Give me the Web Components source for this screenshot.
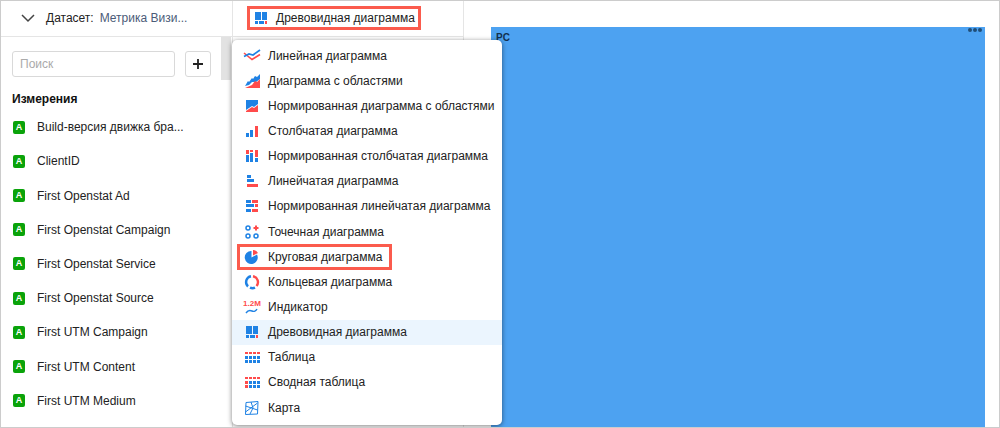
<!DOCTYPE html>
<html lang="ru">
<head>
<meta charset="utf-8">
<title>Датасет: Метрика Визиты</title>
<style>
html, body { height: 100%; margin: 0; }
body { font: 12px/16px "Liberation Sans", Arial, sans-serif; color: #222; background: #fff; }
</style>
</head>
<body>
<wizard-app></wizard-app>

<script>
const define = (name, html, setup) => customElements.define(name, class extends HTMLElement {
  connectedCallback() {
    if (this.shadowRoot) return;
    const root = this.attachShadow({ mode: 'open' });
    const tpl = document.createElement('template');
    tpl.innerHTML = html;
    root.append(tpl.content.cloneNode(true));
    if (setup) setup(this, root);
  }
});

const B = '#1f82e4', R = '#ff4b4b';
const rects = (color, list) => list.map(([x, y, w, h]) =>
  `<rect x="${x}" y="${y}" width="${w}" height="${h}" fill="${color}"/>`).join('');
const grid = (top, left, rest) => [0, 1, 2].flatMap(r => [0, 1, 2, 3].map(c =>
  rects(r === 0 ? top : c === 0 ? left : rest, [[2 + c * 4, 4 + r * 4, 3, r ? 3 : 2]]))).join('');

const ICONS = {
  line: `<path d="M1 6l8 6.500 8-5" fill="none" stroke="${R}" stroke-width="1.6"/><path d="M1 9.500l5-2.500 4 1 7-5" fill="none" stroke="${B}" stroke-width="1.7"/>`,
  area: `<path d="M2 14l3-5 1 1 3-4 1 1 2-3 2 1 3-3v5l-4 3-4 0-3 3z" fill="${B}"/><path d="M2 16l7-3 3-4 2 1 3-3v9z" fill="${R}"/>`,
  area100: `<path d="M3 3h12v4l-4 3-2-1-6 4z" fill="${B}"/><path d="M3 15v-1l6-4 2 1 4-3v7z" fill="${R}"/>`,
  column: rects(B, [[3, 11, 3, 4], [7, 8, 3, 7]]) + rects(R, [[12, 4, 3, 11]]),
  column100: rects(R, [[3, 3, 3, 4], [7, 3, 3, 2], [12, 3, 3, 7]]) + rects(B, [[3, 8, 3, 7], [7, 6, 3, 9], [12, 11, 3, 4]]),
  bar: rects(B, [[4, 3, 4, 3], [4, 7, 7, 3]]) + rects(R, [[4, 12, 11, 3]]),
  bar100: rects(B, [[3, 3, 5, 3], [3, 7, 8, 3], [3, 12, 5, 3]]) + rects(R, [[9, 3, 6, 3], [12, 7, 3, 3], [9, 12, 6, 3]]),
  scatter: `<g fill="none" stroke="${B}" stroke-width="1.5"><circle cx="5" cy="5" r="2"/><circle cx="5" cy="13" r="2"/><circle cx="13" cy="13" r="2"/></g><path d="M13 2.500v5M10.500 5h5" stroke="${R}" stroke-width="2"/>`,
  pie: `<path d="M8.500 3v6.500L14 6.500A6.500 6.500 0 1 1 8.500 3z" fill="${B}"/><path d="M10 7.500V2a6 6 0 0 1 5 3z" fill="${R}"/>`,
  donut: `<g fill="none" stroke-width="2.400"><path d="M8 3.200A6 6 0 0 0 5 13.500M7 14.700a6 6 0 0 0 5 0" stroke="${B}"/><path d="M10 3.200A6 6 0 0 1 13.500 13" stroke="${R}"/></g>`,
  metric: `<text x="9" y="8" text-anchor="middle" font-family="Liberation Sans" font-weight="700" font-size="8" fill="${R}">1.2M</text><path d="M3 15c2-3 4-3 6-2s4 0 5-2" fill="none" stroke="${B}" stroke-width="1.4"/>`,
  treemap: rects(B, [[3, 3, 6, 8], [10, 3, 5, 8], [3, 12, 3, 3], [7, 12, 5, 3]]) + rects(R, [[13, 12, 2, 3]]),
  table: grid(R, B, B),
  pivot: grid(R, R, B),
  map: `<path d="M3 3.500l12-1-.5 12.500-12 .500zM2.500 7l12 4M8 3l2 6-3 6M14.500 4l-12 9" fill="none" stroke="${B}"/>`
};

define('chart-icon', `
<style>
  :host { display: block; flex: none; width: 18px; height: 18px; }
  svg { display: block; width: 100%; height: 100%; }
</style>
<svg viewBox="0 0 18 18" aria-hidden="true"></svg>`,
(el, root) => { root.querySelector('svg').innerHTML = ICONS[el.getAttribute('name')]; });

define('dataset-header', `
<style>
  :host { display: flex; align-items: center; box-sizing: border-box; height: 36px; padding: 0 20px 2px; border-bottom: 1px solid #e5e5e5; }
  button { display: flex; padding: 0; border: 0; background: none; margin-right: 11px; }
  span { margin-right: 6px; }
  a { color: #4b5b78; text-decoration: none; }
</style>
<button type="button" aria-label="Свернуть"><svg width="14" height="14" viewBox="0 0 14 14"><path d="M1 4l6 6 6-6" fill="none" stroke="#444" stroke-width="1.5"/></svg></button>
<span>Датасет:</span><a href="#dataset"><slot></slot></a>`);

define('field-search', `
<style>
  :host { display: flex; gap: 10px; }
  input, button { box-sizing: border-box; height: 26px; margin: 0; border: 1px solid #d9d9d9; border-radius: 3px; background: #fff; font: inherit; color: inherit; }
  input { flex: 1; min-width: 0; padding: 0 7px; }
  input::placeholder { color: #aaa; opacity: 1; }
  button { width: 26px; padding: 0; display: grid; place-items: center; }
</style>
<input type="text" placeholder="Поиск" aria-label="Поиск">
<button type="button" aria-label="Добавить поле"><svg width="12" height="12" viewBox="0 0 12 12"><path d="M6 1v10M1 6h10" stroke="#222" stroke-width="1.800"/></svg></button>`);

define('field-item', `
<style>
  :host { display: flex; align-items: center; gap: 12px; padding-left: 1px; white-space: nowrap; }
  i { display: grid; place-items: center; width: 12px; height: 13px; border-radius: 2px; background: #0aa30a; color: #fff; font: 700 9px/13px "Liberation Sans", Arial, sans-serif; }
</style>
<i>A</i><span><slot></slot></span>`);

define('fields-panel', `
<style>
  :host { display: flex; flex-direction: column; min-height: 0; }
  .body { position: relative; flex: 1; display: flex; flex-direction: column; padding: 14px 21px 9px 11px; }
  .thumb { position: absolute; top: 0; right: 1px; width: 10px; height: 43px; background: #e2e2e2; }
  h2 { margin: 14px 0 3px; font: inherit; font-weight: 700; color: #111; }
  .list { flex: 1; display: flex; flex-direction: column; }
  field-item { flex: 1; }
</style>
<dataset-header>Метрика Визи...</dataset-header>
<div class="body">
  <div class="thumb"></div>
  <field-search></field-search>
  <h2>Измерения</h2>
  <div class="list">
    <field-item>Build-версия движка бра...</field-item>
    <field-item>ClientID</field-item>
    <field-item>First Openstat Ad</field-item>
    <field-item>First Openstat Campaign</field-item>
    <field-item>First Openstat Service</field-item>
    <field-item>First Openstat Source</field-item>
    <field-item>First UTM Campaign</field-item>
    <field-item>First UTM Content</field-item>
    <field-item>First UTM Medium</field-item>
  </div>
</div>`);

define('menu-item', `
<style>
  :host { display: flex; }
  button { position: relative; flex: 1; display: flex; align-items: center; gap: 7px; padding: 0 11px; border: 0; background: none; font: inherit; color: inherit; text-align: left; white-space: nowrap; }
  :host([selected]) button { background: #ebf5fe; }
  :host([marked]) button::after { content: ""; position: absolute; top: 0; bottom: -1px; left: 5px; width: 149px; border: 3px solid #fb5b4d; }
</style>
<button type="button"><chart-icon></chart-icon><span><slot></slot></span></button>`,
(el, root) => {
  const old = root.querySelector('chart-icon'), icon = document.createElement('chart-icon');
  icon.setAttribute('name', el.getAttribute('icon'));
  old.replaceWith(icon);
});

define('chart-menu', `
<style>
  :host { display: flex; flex-direction: column; box-sizing: border-box; padding: 3px 0 5px; background: #fff; border-radius: 5px; box-shadow: 0 1px 5px rgba(0, 0, 0, .5); }
  menu-item { flex: 1; }
</style>
<menu-item icon="line">Линейная диаграмма</menu-item>
<menu-item icon="area">Диаграмма с областями</menu-item>
<menu-item icon="area100">Нормированная диаграмма с областями</menu-item>
<menu-item icon="column">Столбчатая диаграмма</menu-item>
<menu-item icon="column100">Нормированная столбчатая диаграмма</menu-item>
<menu-item icon="bar">Линейчатая диаграмма</menu-item>
<menu-item icon="bar100">Нормированная линейчатая диаграмма</menu-item>
<menu-item icon="scatter">Точечная диаграмма</menu-item>
<menu-item icon="pie" marked>Круговая диаграмма</menu-item>
<menu-item icon="donut">Кольцевая диаграмма</menu-item>
<menu-item icon="metric">Индикатор</menu-item>
<menu-item icon="treemap" selected>Древовидная диаграмма</menu-item>
<menu-item icon="table">Таблица</menu-item>
<menu-item icon="pivot">Сводная таблица</menu-item>
<menu-item icon="map">Карта</menu-item>`);

define('chart-settings', `
<style>
  :host { position: relative; z-index: 1; display: block; border: solid #e5e5e5; border-width: 0 1px; }
  header { display: flex; align-items: center; box-sizing: border-box; height: 36px; padding: 0 14px 2px; border-bottom: 1px solid #e5e5e5; }
  .type { display: flex; align-items: center; gap: 6px; box-sizing: border-box; height: 24px; padding: 0 3px 0 2px; border: 3px solid #fb5b4d; background: none; font: inherit; color: inherit; white-space: nowrap; }
  chart-menu { position: absolute; top: 39px; bottom: 2px; left: -1px; width: 270px; }
</style>
<header><button type="button" class="type" aria-haspopup="menu"><chart-icon name="treemap"></chart-icon><span>Древовидная диаграмма</span></button></header>
<chart-menu></chart-menu>`);

define('treemap-chart', `
<style>
  :host { display: flex; padding: 26px 14px 0 27px; }
  .cell { flex: 1; display: flex; justify-content: space-between; align-items: flex-start; padding: 0 1px 0 5px; background: #4da2f1; }
  b { margin-top: 3px; font-size: 10px; color: #12304f; }
  button { display: flex; padding: 1px 0; border: 0; background: none; }
</style>
<div class="cell"><b>PC</b><button type="button" aria-label="Меню"><svg width="16" height="4" viewBox="0 0 16 4" fill="#204e78"><circle cx="2" cy="2" r="2"/><circle cx="7" cy="2" r="2"/><circle cx="12" cy="2" r="2"/></svg></button></div>`);

define('wizard-app', `
<style>
  :host { display: grid; grid-template-columns: 231px 232px 1fr; box-sizing: border-box; height: 100vh; min-height: 428px; border: 1px solid #ccc; overflow: hidden; }
</style>
<fields-panel></fields-panel>
<chart-settings></chart-settings>
<treemap-chart></treemap-chart>`);
</script>
</body>
</html>
